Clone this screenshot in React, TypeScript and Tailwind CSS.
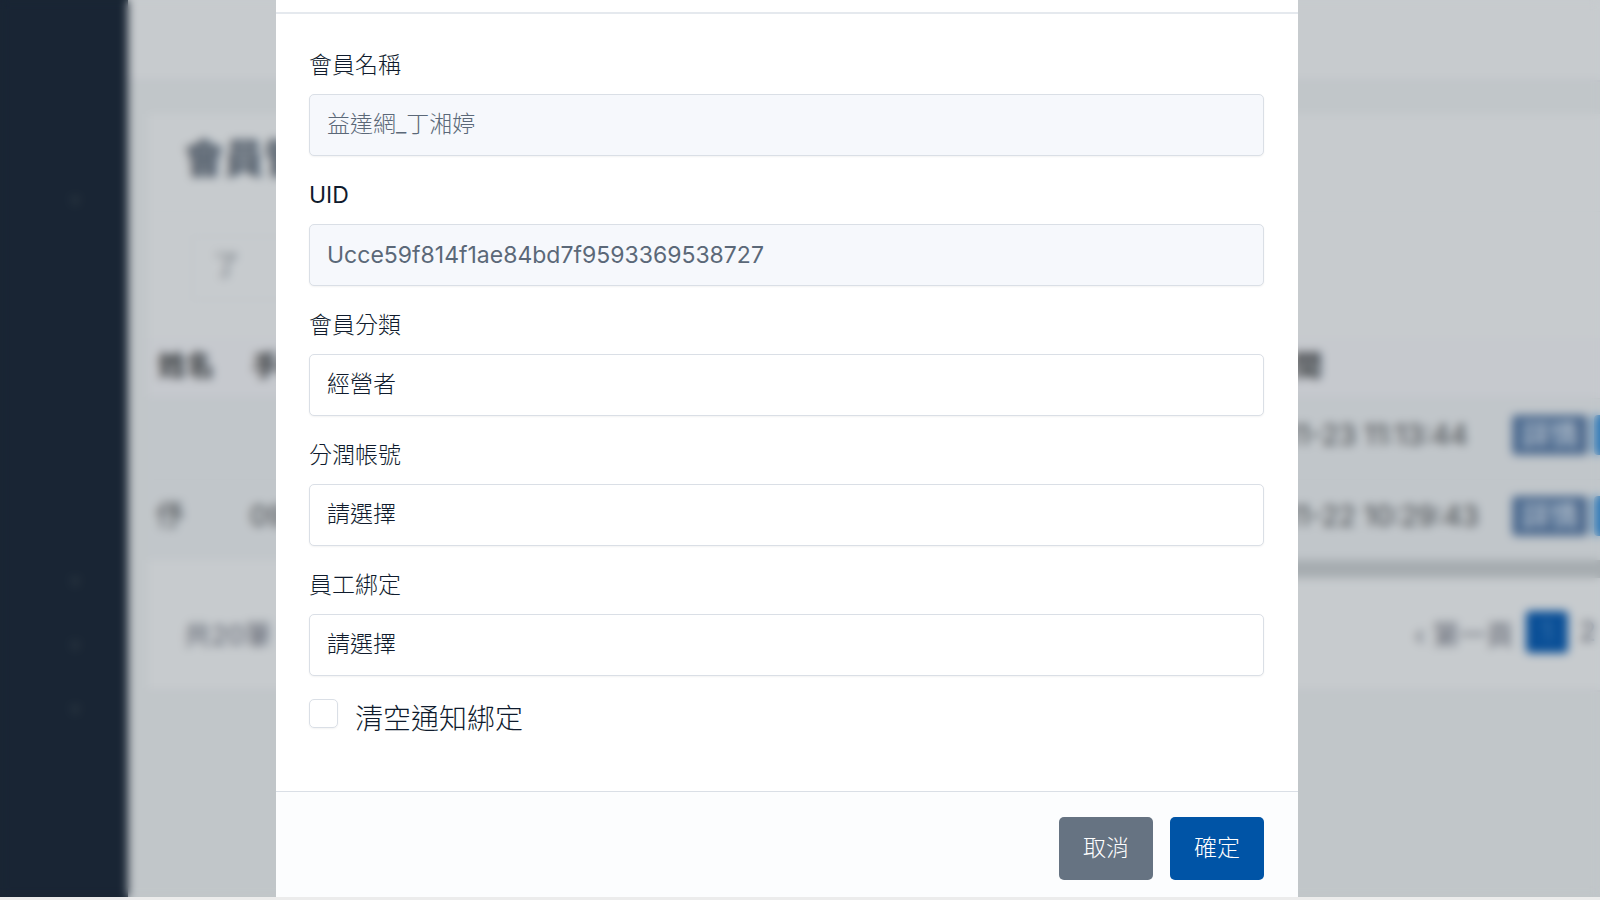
import React from "react";

const members = [
  { id: 1, name: "", phone: "", date: "2021-11-23 11:13:44" },
  { id: 2, name: "伃", phone: "0937", date: "2021-11-22 10:29:43" },
];

function Sidebar() {
  return (
    <aside className="w-[128px] shrink-0 bg-[#192534] text-[#2c3842] text-xl">
      <nav className="flex flex-col items-end pr-12">
        <span className="mt-[186px]">▾</span>
        <span className="mt-[353px]">▾</span>
        <span className="mt-9">▾</span>
        <span className="mt-9">▾</span>
      </nav>
    </aside>
  );
}

function MemberPage() {
  return (
    <main className="flex-1 min-w-0 overflow-hidden bg-[#c1c6c9]">
      <div className="h-[82px] bg-[#c7cbce] border-b-2 border-[#bcbfc6]"></div>

      <div className="mt-8 ml-5 h-[578px] flex flex-col bg-[#c7cbce] border-b-2 border-[#bcbfc5]">
        <div className="h-[98px] pl-9 flex items-center border-b border-[#c1c6c9]">
          <h1 className="text-[40px] leading-none pb-2 font-bold text-[#45515f]">
            會員管理
          </h1>
        </div>
        <div className="h-[126px] pl-[44px] pt-6">
          <div className="w-[400px] h-[64px] pl-5 pb-1 flex items-center rounded border border-[#bec3c7] text-[27px] text-[#70767d]">
            了
          </div>
        </div>

        <table className="w-full table-fixed text-left text-[28px] leading-none text-[#3f4347]">
          <thead>
            <tr className="h-[60px] bg-[#c6c9ce] text-[#34383b]">
              <th className="w-[94px] pl-[10px] pb-1">姓名</th>
              <th className="w-[700px] pl-[10px] pb-1">手機</th>
              <th className="w-[200px]"></th>
              <th className="w-[358px] pr-[178px] pb-1 text-right">時間</th>
              <th></th>
            </tr>
          </thead>
          <tbody>
            {members.map((member) => (
              <tr
                key={member.id}
                className="h-[81px] bg-[#c1c6ca] border-t border-[#bbc0c4]"
              >
                <td className="pl-2 pb-2">{member.name}</td>
                <td className="pl-2 pb-2">{member.phone}</td>
                <td></td>
                <td className="pl-[69px] pb-2 whitespace-nowrap">
                  {member.date}
                </td>
                <td className="pb-2">
                  <div className="flex gap-[6px] pl-3">
                    <span className="w-[76px] shrink-0 h-10 rounded flex items-center justify-center bg-[#4f6c90] text-[#c3cdd7]">
                      詳情
                    </span>
                    <span className="w-[76px] shrink-0 h-10 rounded bg-[#327bb8]"></span>
                  </div>
                </td>
              </tr>
            ))}
          </tbody>
        </table>

        <div className="h-[18px] pl-[200px] shrink-0">
          <div className="h-full bg-[#a6acb0]"></div>
        </div>

        <div className="pl-9 pt-[33px] pr-1 flex justify-between text-[27px] leading-[42px] text-[#5a5f6c]">
          <span className="pt-1">共20筆</span>
          <div className="flex items-start gap-3">
            <span className="pt-1">‹ 第一頁</span>
            <span className="w-[42px] h-[42px] rounded bg-[#0a4f97] text-[#3a74ad] text-center">
              1
            </span>
            <span>2</span>
          </div>
        </div>
      </div>
    </main>
  );
}

const label = "block mb-3 text-[23px] leading-[33px] text-[#0f1b2d]";
const control =
  "block w-full h-[62px] px-[17px] rounded-[5px] border border-[#dadfe6] shadow-xs text-[23px] appearance-none";

function MemberModal() {
  return (
    <form className="ml-[276px] mr-[302px] h-full flex flex-col bg-white">
      <div className="h-[14px] shrink-0 border-b-2 border-[#e5e9ee]"></div>

      <div className="flex-1 pl-[33px] pr-[34px] pt-[35px]">
        <div className="mb-[23px]">
          <label htmlFor="name" className={label + " font-light"}>
            會員名稱
          </label>
          <input
            id="name"
            disabled
            value="益達網_丁湘婷"
            className={control + " pb-[6px] font-light bg-[#f6f8fc] text-[#5b6878]"}
          />
        </div>
        <div className="mb-[23px]">
          <label htmlFor="uid" className={label}>
            UID
          </label>
          <input
            id="uid"
            disabled
            value="Ucce59f814f1ae84bd7f9593369538727"
            className={control + " bg-[#f6f8fc] text-[#5b6878]"}
          />
        </div>
        <div className="mb-[23px]">
          <label htmlFor="category" className={label + " font-light"}>
            會員分類
          </label>
          <select
            id="category"
            className={control + " pb-[2px] font-light bg-white text-[#0f1b2d]"}
          >
            <option>經營者</option>
          </select>
        </div>
        <div className="mb-[23px]">
          <label htmlFor="account" className={label + " font-light"}>
            分潤帳號
          </label>
          <select
            id="account"
            className={control + " pb-[2px] font-light bg-white text-[#0f1b2d]"}
          >
            <option>請選擇</option>
          </select>
        </div>
        <div className="mb-[23px]">
          <label htmlFor="staff" className={label + " font-light"}>
            員工綁定
          </label>
          <select
            id="staff"
            className={control + " pb-[2px] font-light bg-white text-[#0f1b2d]"}
          >
            <option>請選擇</option>
          </select>
        </div>

        <div className="flex items-start">
          <input
            id="clear"
            type="checkbox"
            className="w-[29px] h-[29px] appearance-none rounded-[5px] border border-[#dadfe6] shadow-xs checked:bg-[#0054a6]"
          />
          <label
            htmlFor="clear"
            className="ml-[17px] text-[28px] leading-10 font-light text-[#0f1b2d]"
          >
            清空通知綁定
          </label>
        </div>
      </div>

      <div className="pl-[33px] pr-[34px] pt-[25px] pb-[17px] flex justify-end gap-[17px] bg-[#fcfdfe] border-t border-[#dadfe6]">
        <button
          type="button"
          className="w-[94px] h-[63px] rounded-[5px] bg-[#667382] text-white text-[23px] font-light"
        >
          取消
        </button>
        <button
          type="submit"
          className="w-[94px] h-[63px] rounded-[5px] bg-[#0054a6] text-white text-[23px] font-light"
        >
          確定
        </button>
      </div>
    </form>
  );
}

function App() {
  return (
    <div className="h-screen flex flex-col bg-[#ececec] font-[Inter,'Noto_Sans_CJK_TC',sans-serif]">
      <div className="relative flex-1 min-h-0 mb-[3px] flex overflow-hidden">
        <Sidebar />
        <MemberPage />
        <div className="absolute inset-0 backdrop-blur-[5px]">
          <MemberModal />
        </div>
      </div>
    </div>
  );
}

export default App;
